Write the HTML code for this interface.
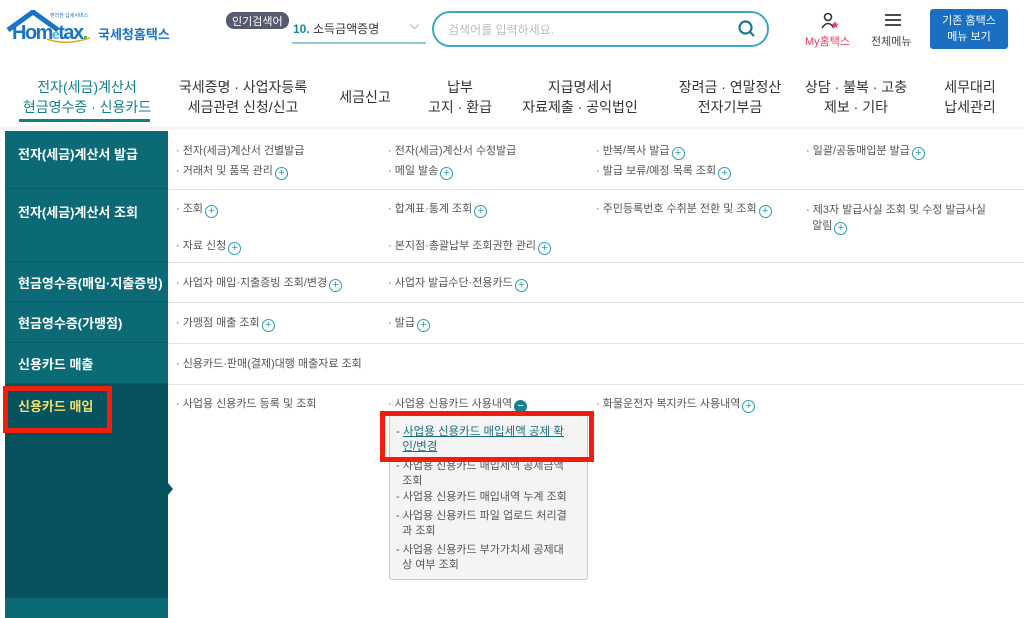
<!DOCTYPE html>
<html><head><meta charset="utf-8"><style>
*{margin:0;padding:0;box-sizing:border-box}
body{width:1024px;height:612px;overflow:hidden;background:#fff;font-family:"Liberation Sans","Noto Sans CJK KR",sans-serif;position:relative;color:#444}
.a{position:absolute;white-space:nowrap}
.nav{font-size:14px;color:#333;text-align:center;line-height:20px}
.side{position:absolute;left:5px;width:163px;background:#0b6a76;color:#fff;font-size:13px;font-weight:bold;padding-left:13px;border-bottom:1px solid #0a5c66}
.it{position:absolute;font-size:11px;color:#555;white-space:nowrap;line-height:14px}
.p{display:inline-block;width:13px;height:13px;border:1px solid #2a9bb0;border-radius:50%;color:#2a9bb0;font-size:11px;line-height:10px;text-align:center;vertical-align:-2px;margin-left:2px}
.hl{position:absolute;left:168px;right:0;height:1px;background:#e2e2e2}
</style></head><body>
<!-- logo -->
<svg class="a" style="left:6px;top:10px" width="60" height="22" viewBox="0 0 60 22"><path d="M2 20 L27 2 L52 20" fill="none" stroke="#1a73c4" stroke-width="5"/></svg>
<div class="a" style="left:12px;top:22px;font-size:20px;font-weight:bold;color:#1a73c4;letter-spacing:-1.5px">Hom<span style="font-size:14px;color:#4ab4e0">e</span>tax<span style="color:#3ab54a">.</span></div>
<div class="a" style="left:50px;top:12px;font-size:5px;color:#1a73c4">편리한 납세서비스</div>
<svg class="a" style="left:45px;top:36px" width="50" height="10"><path d="M2 3 Q20 10 45 2" fill="none" stroke="#f0a020" stroke-width="1.5"/></svg>
<div class="a" style="left:98px;top:24px;font-size:13px;font-weight:bold;color:#1a73c4">국세청홈택스</div>
<!-- search -->
<div class="a" style="left:226px;top:12px;background:#555a6e;color:#fff;font-size:11px;border-radius:8px;padding:1px 6px;height:17px">인기검색어</div>
<div class="a" style="left:293px;top:20px;font-size:12px;color:#333"><b style="color:#138a96">10.</b> 소득금액증명</div>
<div class="a" style="left:410px;top:18px;font-size:12px;color:#777">⌵</div>
<div class="a" style="left:292px;top:42px;width:134px;height:2px;background:#8ecbd2"></div>
<div class="a" style="left:432px;top:11px;width:337px;height:36px;border:2px solid #3aa9c4;border-radius:18px"></div>
<div class="a" style="left:448px;top:21px;font-size:12px;color:#bbb">검색어를 입력하세요.</div>
<svg class="a" style="left:737px;top:19px" width="20" height="20"><circle cx="8.5" cy="8.5" r="6" fill="none" stroke="#157d8b" stroke-width="2.2"/><path d="M13 13 L17 17" stroke="#157d8b" stroke-width="2.2"/></svg>
<svg class="a" style="left:820px;top:12px" width="22" height="18"><circle cx="8" cy="5" r="3.5" fill="none" stroke="#333" stroke-width="1.6"/><path d="M2 16 Q8 7 14 16" fill="none" stroke="#333" stroke-width="1.6"/><path d="M15 9 l1.2 2.5 2.6.3-2 1.8.6 2.6-2.4-1.4-2.4 1.4.6-2.6-2-1.8 2.6-.3z" fill="#e8456a"/></svg>
<div class="a" style="left:805px;top:33px;font-size:11px;color:#e23c5c">My홈택스</div>
<svg class="a" style="left:884px;top:13px" width="18" height="14"><path d="M1 2H17M1 7H17M1 12H17" stroke="#333" stroke-width="1.8"/></svg>
<div class="a" style="left:871px;top:33px;font-size:11px;color:#444">전체메뉴</div>
<div class="a" style="left:930px;top:9px;width:78px;height:40px;background:#1a6fc0;border-radius:3px;color:#fff;font-size:11px;text-align:center;line-height:16px;padding-top:4px">기존 홈택스<br>메뉴 보기</div>
<!-- nav -->
<div class="a nav" style="left:20px;top:77px;width:134px;color:#137f88">전자(세금)계산서<br>현금영수증 · 신용카드</div>
<div class="a" style="left:19px;top:119px;width:131px;height:3px;background:#137f88"></div>
<div class="a nav" style="left:176px;top:77px;width:134px">국세증명 · 사업자등록<br>세금관련 신청/신고</div>
<div class="a nav" style="left:335px;top:87px;width:60px">세금신고</div>
<div class="a nav" style="left:420px;top:77px;width:80px">납부<br>고지 · 환급</div>
<div class="a nav" style="left:515px;top:77px;width:130px">지급명세서<br>자료제출 · 공익법인</div>
<div class="a nav" style="left:665px;top:77px;width:130px">장려금 · 연말정산<br>전자기부금</div>
<div class="a nav" style="left:800px;top:77px;width:112px">상담 · 불복 · 고충<br>제보 · 기타</div>
<div class="a nav" style="left:930px;top:77px;width:80px">세무대리<br>납세관리</div>
<div class="a" style="left:0;top:126px;width:1024px;height:4px;background:#f4f4f4"></div>
<!-- sidebar -->
<div class="side" style="top:131px;height:58px;padding-top:13px">전자(세금)계산서 발급</div>
<div class="side" style="top:189px;height:73px;padding-top:13px">전자(세금)계산서 조회</div>
<div class="side" style="top:262px;height:40px;padding-top:11px">현금영수증(매입·지출증빙)</div>
<div class="side" style="top:302px;height:41px;padding-top:11px">현금영수증(가맹점)</div>
<div class="side" style="top:343px;height:41px;padding-top:11px">신용카드 매출</div>
<div class="side" style="top:384px;height:214px;padding-top:12px;background:#06525e;color:#f0e06a;border:none">신용카드 매입</div>
<div class="a" style="left:168px;top:483px;width:0;height:0;border-top:6px solid transparent;border-bottom:6px solid transparent;border-left:5px solid #06525e"></div>
<div class="side" style="top:598px;height:20px;border:none"></div>
<div class="hl" style="top:189px"></div><div class="hl" style="top:262px"></div><div class="hl" style="top:302px"></div><div class="hl" style="top:343px"></div><div class="hl" style="top:384px"></div>
<!-- items -->
<div class="it" style="left:176px;top:144px">· 전자(세금)계산서 건별발급</div>
<div class="it" style="left:176px;top:164px">· 거래처 및 품목 관리<span class="p">+</span></div>
<div class="it" style="left:388px;top:144px">· 전자(세금)계산서 수정발급</div>
<div class="it" style="left:388px;top:164px">· 메일 발송<span class="p">+</span></div>
<div class="it" style="left:596px;top:144px">· 반복/복사 발급<span class="p">+</span></div>
<div class="it" style="left:596px;top:164px">· 발급 보류/예정 목록 조회<span class="p">+</span></div>
<div class="it" style="left:806px;top:144px">· 일괄/공동매입분 발급<span class="p">+</span></div>
<div class="it" style="left:176px;top:202px">· 조회<span class="p">+</span></div>
<div class="it" style="left:388px;top:202px">· 합계표·통계 조회<span class="p">+</span></div>
<div class="it" style="left:596px;top:202px">· 주민등록번호 수취분 전환 및 조회<span class="p">+</span></div>
<div class="it" style="left:806px;top:202px;line-height:16px">· 제3자 발급사실 조회 및 수정 발급사실<br>&nbsp;&nbsp;알림<span class="p">+</span></div>
<div class="it" style="left:176px;top:239px">· 자료 신청<span class="p">+</span></div>
<div class="it" style="left:388px;top:239px">· 본지점·총괄납부 조회권한 관리<span class="p">+</span></div>
<div class="it" style="left:176px;top:276px">· 사업자 매입·지출증빙 조회/변경<span class="p">+</span></div>
<div class="it" style="left:388px;top:276px">· 사업자 발급수단·전용카드<span class="p">+</span></div>
<div class="it" style="left:176px;top:316px">· 가맹점 매출 조회<span class="p">+</span></div>
<div class="it" style="left:388px;top:316px">· 발급<span class="p">+</span></div>
<div class="it" style="left:176px;top:357px">· 신용카드·판매(결제)대행 매출자료 조회</div>
<div class="it" style="left:176px;top:397px">· 사업용 신용카드 등록 및 조회</div>
<div class="it" style="left:388px;top:397px">· 사업용 신용카드 사용내역<span class="p" style="background:#1a7f8c;color:#fff;border-color:#1a7f8c">−</span></div>
<div class="it" style="left:596px;top:397px">· 화물운전자 복지카드 사용내역<span class="p">+</span></div>
<!-- popup -->
<div class="a" style="left:389px;top:414px;width:199px;height:166px;background:#f4f4f4;border:1px solid #c8c8c8;border-radius:3px"></div>
<div class="it" style="left:396px;top:425px;line-height:15px;color:#1a6f80;font-size:11.5px">- <u>사업용 신용카드 매입세액 공제 확</u><br>&nbsp;&nbsp;<u>인/변경</u></div>
<div class="it" style="left:396px;top:459px;line-height:15px">- 사업용 신용카드 매입세액 공제금액<br>&nbsp;&nbsp;조회</div>
<div class="it" style="left:396px;top:490px">- 사업용 신용카드 매입내역 누계 조회</div>
<div class="it" style="left:396px;top:509px;line-height:15px">- 사업용 신용카드 파일 업로드 처리결<br>&nbsp;&nbsp;과 조회</div>
<div class="it" style="left:396px;top:543px;line-height:15px">- 사업용 신용카드 부가가치세 공제대<br>&nbsp;&nbsp;상 여부 조회</div>
<!-- red boxes -->
<div class="a" style="left:3px;top:386px;width:109px;height:47px;border:5px solid #f01e0a"></div>
<div class="a" style="left:380px;top:411px;width:214px;height:51px;border:5px solid #f01e0a"></div>
</body></html>
